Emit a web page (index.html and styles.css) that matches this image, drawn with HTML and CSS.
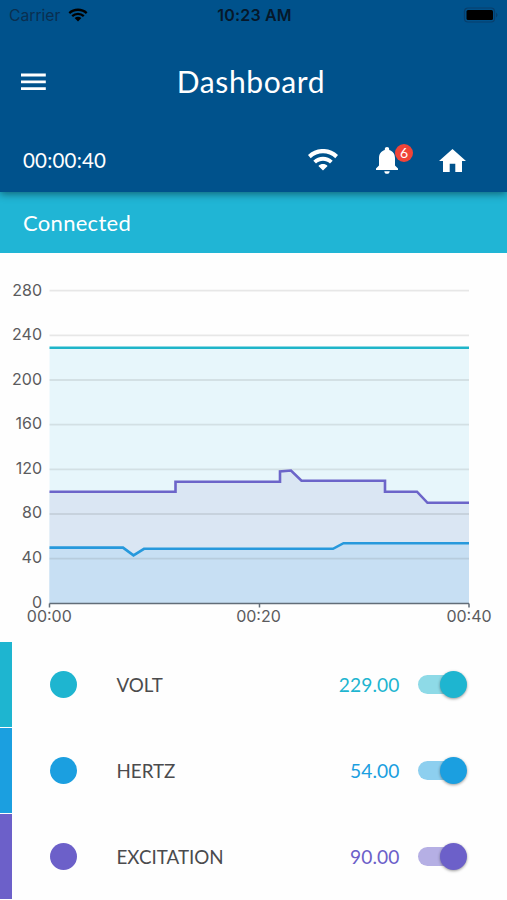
FILE: index.html
```html
<!DOCTYPE html>
<html lang="en">
<head>
    <meta charset="UTF-8">
    <meta name="viewport" content="width=device-width, initial-scale=1.0">
    <title>Dashboard</title>
    <link rel="stylesheet" href="styles.css">
</head>
<body>
    <header class="header">
        <div class="status-bar">
            <div class="carrier">
                <span>Carrier</span>
                <svg width="20" height="14" viewBox="0 0 20 14">
                    <path d="M1.3 5.1 C6 .6 14 .6 18.7 5.1 M4.2 8.1 C7.4 5.1 12.6 5.1 15.8 8.1" fill="none" stroke="#000" stroke-width="2.3"/>
                    <path d="M6.6 10 Q10 7.3 13.4 10 L10 13.4Z"/>
                </svg>
            </div>
            <span class="clock">10:23 AM</span>
            <svg class="battery" width="37" height="16" viewBox="0 0 37 16">
                <rect x="2.5" y="1" width="30" height="14" rx="3.5" fill="none" stroke="#083f6c" stroke-width="1.2"/>
                <rect x="4.5" y="3" width="26.5" height="10" rx="1.5"/>
                <path d="M34 5.5 Q37 8 34 10.5Z" fill="#083f6c"/>
            </svg>
        </div>
        <div class="title-bar">
            <svg class="menu" width="26" height="18" viewBox="0 0 26 18">
                <path d="M0 2H24.8M0 8.8H24.8M0 15.6H24.8" stroke="#fff" stroke-width="2.8"/>
            </svg>
            <h1>Dashboard</h1>
        </div>
        <div class="tool-bar">
            <span class="timer">00:00:40</span>
            <div class="tools">
                <svg width="30" height="22" viewBox="0 0 30 22">
                    <path d="M0 6.1 C8.3 -2.1 21.7 -2.1 30 6.1 L27.3 9.2 C20.5 2.6 9.5 2.6 2.7 9.2Z M5.3 11.7 C10.7 6.4 19.3 6.4 24.7 11.7 L22 14.5 C18.1 10.7 11.9 10.7 8 14.5Z M10.4 17 C13 14.4 17 14.4 19.6 17 L15 21.6Z" fill="#fff"/>
                </svg>
                <div class="alerts">
                    <svg width="22" height="27" viewBox="0 0 22 27">
                        <path d="M11 0 C12.3 0 13.2.9 13.2 2.2 V3 C17 4 19 7.3 19 11 V18.6 L22 21.5 V23 H0 V21.5 L3 18.6 V11 C3 7.3 5 4 8.8 3 V2.2 C8.8.9 9.7 0 11 0Z M8.3 24.2 H13.7 C13.7 25.8 12.5 26.8 11 26.8 S8.3 25.8 8.3 24.2Z" fill="#fff"/>
                    </svg>
                    <span class="badge">6</span>
                </div>
                <svg width="27" height="23" viewBox="0 0 27 23">
                    <path d="M13.5 0 L27 12 H23 V23 H16.3 V14.7 H10.7 V23 H4 V12 H0Z" fill="#fff"/>
                </svg>
            </div>
        </div>
    </header>

    <div class="connection">Connected</div>

    <svg class="chart" width="507" height="388.6" viewBox="0 0 507 388.6">
        <g class="area">
            <path d="M49.5 94.7H469V350.5H49.5Z" fill="#e7f6fb"/>
            <path d="M49.5 238.7H175.5V228.7H280V218.5L291 217.5L301.5 227.7H385V238.7H417L427.5 249.8H469V350.5H49.5Z" fill="#dae6f3"/>
            <path d="M49.5 294.6H123L133.5 302.4L144 295.8H333L343.5 290.2H469V350.5H49.5Z" fill="#c7dff3"/>
        </g>
        <path class="grid" d="M49.5 37.7H469M49.5 82.3H469M49.5 127H469M49.5 171.7H469M49.5 216.4H469M49.5 261H469M49.5 305.7H469"/>
        <path class="axis" d="M49.5 350.5H469M49.5 350.5V354.5M259.5 350.5V354.5M469 350.5V354.5"/>
        <g class="lines">
            <path d="M49.5 94.7H469" stroke="#1fb5c9"/>
            <path d="M49.5 238.7H175.5V228.7H280V218.5L291 217.5L301.5 227.7H385V238.7H417L427.5 249.8H469" stroke="#6c65c9"/>
            <path d="M49.5 294.6H123L133.5 302.4L144 295.8H333L343.5 290.2H469" stroke="#2799dc"/>
        </g>
        <g class="y-labels">
            <text x="42" y="43">280</text>
            <text x="42" y="87.5">240</text>
            <text x="42" y="132">200</text>
            <text x="42" y="176.5">160</text>
            <text x="42" y="221">120</text>
            <text x="42" y="265.5">80</text>
            <text x="42" y="310">40</text>
            <text x="42" y="355.5">0</text>
        </g>
        <g class="x-labels">
            <text x="49.3" y="369.5">00:00</text>
            <text x="258.5" y="369.5">00:20</text>
            <text x="469" y="369.5">00:40</text>
        </g>
    </svg>

    <ul class="readings">
        <li class="reading volt">
            <span class="dot"></span>
            <span class="name">VOLT</span>
            <span class="value">229.00</span>
            <span class="switch"><span class="thumb"></span></span>
        </li>
        <li class="reading hertz">
            <span class="dot"></span>
            <span class="name">HERTZ</span>
            <span class="value">54.00</span>
            <span class="switch"><span class="thumb"></span></span>
        </li>
        <li class="reading excitation">
            <span class="dot"></span>
            <span class="name">EXCITATION</span>
            <span class="value">90.00</span>
            <span class="switch"><span class="thumb"></span></span>
        </li>
    </ul>
</body>
</html>
```

FILE: styles.css
```css
* {
    box-sizing: border-box;
}
body {
    margin: 0;
    height: 900px;
    overflow: hidden;
    background-color: #fefefe;
    font-family: Lato, sans-serif;
}
svg {
    display: block;
}
.header {
    position: relative;
    height: 192px;
    background-color: #00528c;
    color: white;
    box-shadow: 0 2px 8px rgba(0,0,0,0.45);
}
.status-bar {
    display: grid;
    grid-template-columns: 1fr auto 1fr;
    align-items: center;
    height: 30px;
    padding: 0 8px 0 9px;
    color: #06182a;
    font-family: Inter, sans-serif;
    font-size: 16px;
}
.carrier {
    display: flex;
    align-items: center;
    gap: 8px;
    color: #0a2f50;
    font-size: 15.7px;
}
.clock {
    padding-left: 1px;
    font-weight: 600;
    letter-spacing: 0.2px;
}
.battery {
    justify-self: end;
}
.title-bar {
    display: grid;
    grid-template-columns: 60px 1fr 60px;
    align-items: center;
    height: 104px;
    padding-left: 21px;
    margin-right: 26px;
}
h1 {
    margin: 0;
    padding-bottom: 3px;
    text-align: center;
    font-size: 30px;
    font-weight: normal;
    letter-spacing: 0.6px;
}
.tool-bar {
    display: flex;
    justify-content: space-between;
    align-items: center;
    height: 52px;
    padding: 0 41px 0 23px;
}
.timer {
    font-size: 20.5px;
    letter-spacing: 0.2px;
}
.tools {
    display: flex;
    align-items: center;
}
.alerts {
    position: relative;
    margin: 0 41px 0 38px;
}
.badge {
    position: absolute;
    top: -3px;
    left: 19px;
    width: 18px;
    height: 18px;
    border-radius: 50%;
    background-color: #f04438;
    font-size: 14px;
    line-height: 18px;
    text-align: center;
}
.connection {
    height: 61px;
    padding-left: 23px;
    background-color: #20b5d5;
    color: white;
    font-size: 22px;
    line-height: 62px;
    letter-spacing: 0.3px;
}
.chart {
    font-family: Inter, sans-serif;
    font-size: 16px;
    fill: #5b5b5d;
}
.grid {
    stroke: rgba(80,80,80,0.13);
    stroke-width: 1.8;
}
.axis {
    stroke: #626d78;
    stroke-width: 1.5;
}
.lines {
    fill: none;
    stroke-width: 2.6;
}
.y-labels {
    text-anchor: end;
}
.x-labels {
    text-anchor: middle;
}
.readings {
    display: flex;
    flex-direction: column;
    gap: 1.2px;
    margin: 0;
    padding: 0;
    list-style: none;
}
.reading {
    display: flex;
    align-items: center;
    height: 85px;
    padding: 0 40px 0 37.5px;
    border-left: 12px solid var(--color);
}
.volt {
    --color: #1eb5d0;
}
.hertz {
    --color: #1b9fe0;
}
.excitation {
    --color: #6c60c9;
}
.dot {
    width: 27px;
    height: 27px;
    margin-right: 40px;
    border-radius: 50%;
    background-color: var(--color);
}
.name {
    flex: 1;
    color: #4b4b4d;
    font-size: 18.8px;
}
.value {
    margin-right: 18.5px;
    color: var(--color);
    font-size: 19.2px;
    letter-spacing: 0.1px;
}
.switch {
    position: relative;
    display: flex;
    align-items: center;
    justify-content: flex-end;
    width: 49px;
    height: 27px;
}
.switch::before {
    content: "";
    position: absolute;
    left: 0;
    width: 42px;
    height: 19px;
    border-radius: 10px;
    background-color: var(--color);
    opacity: 0.5;
}
.thumb {
    position: relative;
    width: 27px;
    height: 27px;
    border-radius: 50%;
    background-color: var(--color);
    box-shadow: 0 1px 3px rgba(0,0,0,0.4);
}
```
